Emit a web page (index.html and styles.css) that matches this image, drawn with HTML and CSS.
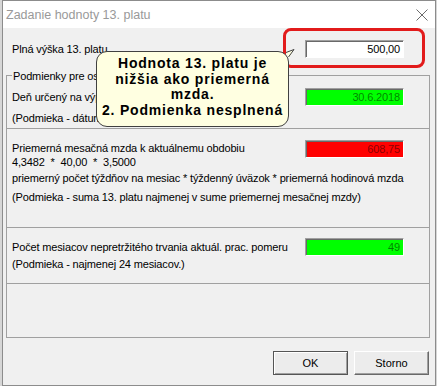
FILE: index.html
```html
<!DOCTYPE html>
<html lang="sk">
<head>
  <meta charset="UTF-8">
  <title>Zadanie hodnoty 13. platu</title>
  <link rel="stylesheet" href="styles.css">
</head>
<body>
  <div class="window">
    <div class="titlebar">
      <span class="title">Zadanie hodnoty 13. platu</span>
      <svg class="close" width="12" height="12" viewBox="0 0 12 12">
        <path d="M0.5 0.5 L11.5 11.5 M11.5 0.5 L0.5 11.5" stroke="#6b6b6b" stroke-width="1" fill="none"/>
      </svg>
    </div>

    <div class="content">
      <div class="top-row">
        <span>Plná výška 13. platu</span>
        <div class="field">500,00</div>
      </div>

      <div class="groupbox">
        <span class="legend">Podmienky pre ostatné nároky</span>

        <div class="panel panel-date">
          <div class="row">
            <span>Deň určený na výplatu</span>
            <div class="field ok">30.6.2018</div>
          </div>
          <div class="note">(Podmieka - dátum výplaty)</div>
        </div>

        <div class="panel panel-wage">
          <div class="row top">
            <div class="lines">
              <div>Priemerná mesačná mzda k aktuálnemu obdobiu</div>
              <div>4,3482 &nbsp;* &nbsp;40,00 &nbsp;* &nbsp;3,5000</div>
            </div>
            <div class="field bad">608,75</div>
          </div>
          <div class="formula">priemerný počet týždňov na mesiac * týždenný úväzok * priemerná hodinová mzda</div>
          <div class="note note-sum">(Podmieka - suma 13. platu najmenej v sume priemernej mesačnej mzdy)</div>
        </div>

        <div class="panel panel-months">
          <div class="row">
            <span>Počet mesiacov nepretržitého trvania aktuál. prac. pomeru</span>
            <div class="field ok">49</div>
          </div>
          <div class="note note-months">(Podmieka - najmenej 24 mesiacov.)</div>
        </div>

        <div class="panel panel-empty"></div>
      </div>

      <div class="buttons">
        <button class="default">OK</button>
        <button>Storno</button>
      </div>
    </div>

    <div class="highlight"></div>

    <div class="tooltip">
      <svg class="tail" width="9" height="9" viewBox="0 0 9 9">
        <polygon points="0,4 8,0.5 3,9" fill="#ffffe1"/>
        <polyline points="0,3.5 8,0.5 2.5,8" fill="none" stroke="#404040" stroke-width="1"/>
      </svg>
      Hodnota 13. platu je<br>
      nižšia ako priemerná<br>
      mzda.<br>
      2. Podmienka nesplnená
    </div>
  </div>
</body>
</html>
```

FILE: styles.css
```css
* {
  box-sizing: border-box;
}

body {
  margin: 0;
  background: #d6d6d6;
  font-family: "Liberation Sans", Arial, sans-serif;
  font-size: 11px;
  letter-spacing: -0.15px;
  color: #000;
}

.window {
  position: relative;
  width: 434px;
  height: 386px;
  margin-left: 2px;
  border: 1px solid #8c8c8c;
  background: #f0f0f0;
}

.titlebar {
  display: flex;
  align-items: center;
  justify-content: space-between;
  height: 27px;
  padding: 0 7px 0 3px;
  background: #fff;
}

.title {
  font-size: 12.5px;
  letter-spacing: 0;
  color: #999;
}

.content {
  padding: 0 5px 0 3px;
}

.top-row {
  display: flex;
  align-items: center;
  justify-content: space-between;
  height: 18px;
  margin-top: 12px;
  padding: 0 26px 0 6px;
}

.field {
  width: 99px;
  height: 18px;
  padding: 0 3px;
  line-height: 16px;
  text-align: right;
  background: #fff;
  border: 1px solid;
  border-color: #a0a0a0 #fff #fff #a0a0a0;
  box-shadow: inset 1px 1px 0 #696969;
}

.field.ok {
  background: #00ff00;
  color: rgba(0, 0, 0, 0.5);
}

.field.bad {
  background: #ff0000;
  color: rgba(0, 0, 0, 0.5);
}

.groupbox {
  position: relative;
  height: 263px;
  margin-top: 17px;
  border: 1px solid #a0a0a0;
}

.legend {
  position: absolute;
  top: -7px;
  left: 5px;
  padding: 0 1px;
  line-height: 14px;
  white-space: nowrap;
  background: #f0f0f0;
}

.panel {
  padding: 0 25px 0 5px;
  line-height: 14px;
}

.panel + .panel {
  border-top: 1px solid #a0a0a0;
}

.row {
  display: flex;
  align-items: center;
  justify-content: space-between;
  height: 18px;
}

.row.top {
  align-items: flex-start;
  height: auto;
}

.lines {
  padding-top: 1px;
}

.panel-date {
  height: 52px;
  padding-top: 12px;
}

.panel-date .note {
  margin-top: 5px;
}

.panel-wage {
  height: 99px;
  padding-top: 11px;
}

.formula {
  margin-top: 2px;
  white-space: nowrap;
}

.note-sum {
  margin-top: 5px;
}

.panel-months {
  height: 56px;
  padding-top: 10px;
}

.note-months {
  margin-top: 1px;
}

.panel-empty {
  height: 54px;
}

.buttons {
  display: flex;
  justify-content: flex-end;
  gap: 6px;
  margin-top: 13px;
  padding-right: 1px;
}

button {
  width: 75px;
  height: 24px;
  padding: 0;
  font-family: "Liberation Sans", Arial, sans-serif;
  font-size: 11px;
  color: #000;
  background: #ececec;
  border: 1px solid;
  border-color: #fff #696969 #696969 #fff;
  box-shadow: inset -1px -1px 0 #a0a0a0;
}

button.default {
  border: 1px solid #555;
  box-shadow: inset 1px 1px 0 #fff, inset -1px -1px 0 #a0a0a0;
}

.highlight {
  position: absolute;
  left: 280px;
  top: 27px;
  width: 142px;
  height: 40px;
  border: 3px solid #e21b1b;
  border-radius: 8px;
}

.tooltip {
  position: absolute;
  left: 93px;
  top: 50px;
  width: 193px;
  height: 76px;
  padding-top: 4px;
  border: 1px solid #404040;
  border-radius: 11px;
  background: #ffffe1;
  font-size: 14px;
  font-weight: bold;
  line-height: 15.7px;
  letter-spacing: 0.8px;
  text-align: center;
}

.tail {
  position: absolute;
  top: -3px;
  right: -7px;
}
```
